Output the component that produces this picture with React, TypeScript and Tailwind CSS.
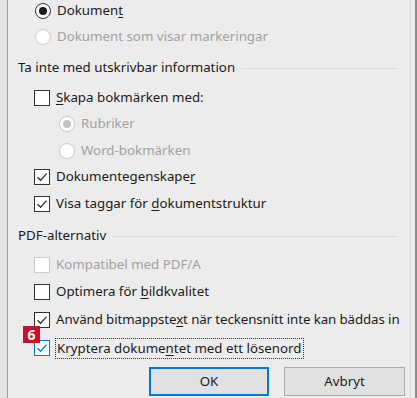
import React from 'react';

type BoxProps = { checked?: boolean; disabled?: boolean; hot?: boolean };

const CheckBox = ({ checked, disabled, hot }: BoxProps) => {
    const border = hot ? 'border-[#0078d7]' : disabled ? 'border-[#cccccc]' : 'border-[#333333]';
    const stroke = hot ? '#0078d7' : '#333333';
    return (
        <span className={`flex h-[16px] w-[16px] shrink-0 items-center justify-center border ${border} bg-white`}>
            {checked && (
                <svg width="12" height="12" viewBox="0 0 12 12" fill="none">
                    <path d="M1.5 6.2 L4.6 9.2 L10.6 2.6" stroke={stroke} strokeWidth="1.3" />
                </svg>
            )}
        </span>
    );
};

const Radio = ({ checked, disabled }: BoxProps) => (
    <span
        className={`flex h-[16px] w-[16px] shrink-0 items-center justify-center rounded-full border bg-white ${
            disabled ? 'border-[#cccccc]' : 'border-[#333333]'
        }`}
    >
        {checked && <span className={`h-[8px] w-[8px] rounded-full ${disabled ? 'bg-[#c4c4c4]' : 'bg-[#1b1b1b]'}`} />}
    </span>
);

const Row = ({ indent, mt, children }: { indent: string; mt: string; children: React.ReactNode }) => (
    <div className={`flex h-[26px] items-center gap-[6px] ${indent} ${mt}`}>{children}</div>
);

const Header = ({ text, mt }: { text: string; mt: string }) => (
    <div className={`flex h-[26px] items-center gap-[6px] pl-[10px] pr-[12px] ${mt}`}>
        <span className="text-[#1b1b1b]">{text}</span>
        <span className="h-px flex-1 bg-[#dadada]" />
    </div>
);

export default function App() {
    return (
        <div
            className="flex h-[398px] w-[417px] overflow-hidden bg-[#e4e4e4] text-[13.3px] text-[#1b1b1b]"
            style={{ fontFamily: '"Noto Sans", "Open Sans", sans-serif' }}
        >
            <div className="w-[7px] shrink-0 bg-[#e2e2e2]" />
            <div className="w-px shrink-0 bg-[#9a9a9a]" />
            <div className="relative flex flex-1 flex-col bg-[#ececec]">
                <div className="flex h-[22px] items-center gap-[6px] pl-[27px]">
                    <Radio checked />
                    <span>
                        Dokumen<span className="underline underline-offset-2">t</span>
                    </span>
                </div>
                <Row indent="pl-[27px]" mt="mt-[2px]">
                    <Radio disabled />
                    <span className="text-[#a2a2a2]">Dokument som visar markeringar</span>
                </Row>
                <Header text="Ta inte med utskrivbar information" mt="mt-[5px]" />
                <Row indent="pl-[26px]" mt="mt-[4px]">
                    <CheckBox />
                    <span>
                        <span className="underline underline-offset-2">S</span>kapa bokmärken med:
                    </span>
                </Row>
                <Row indent="pl-[51px]" mt="mt-0">
                    <Radio checked disabled />
                    <span className="text-[#a2a2a2]">Rubriker</span>
                </Row>
                <Row indent="pl-[51px]" mt="mt-[1px]">
                    <Radio disabled />
                    <span className="text-[#a2a2a2]">Word-bokmärken</span>
                </Row>
                <Row indent="pl-[26px]" mt="mt-0">
                    <CheckBox checked />
                    <span>
                        Dokumentegenskape<span className="underline underline-offset-2">r</span>
                    </span>
                </Row>
                <Row indent="pl-[26px]" mt="mt-[1px]">
                    <CheckBox checked />
                    <span>
                        Visa taggar för <span className="underline underline-offset-2">d</span>okumentstruktur
                    </span>
                </Row>
                <Header text="PDF-alternativ" mt="mt-[6px]" />
                <Row indent="pl-[26px]" mt="mt-[3px]">
                    <CheckBox disabled />
                    <span className="text-[#a2a2a2]">Kompatibel med PDF/A</span>
                </Row>
                <Row indent="pl-[26px]" mt="mt-[1px]">
                    <CheckBox />
                    <span>
                        Optimera för <span className="underline underline-offset-2">b</span>ildkvalitet
                    </span>
                </Row>
                <Row indent="pl-[26px]" mt="mt-[2px]">
                    <CheckBox checked />
                    <span className="whitespace-nowrap tracking-[-0.1px]">
                        Använd bitmappste<span className="underline underline-offset-2">x</span>t när teckensnitt inte kan bäddas in
                    </span>
                </Row>
                <div className="relative mt-[2px] flex h-[26px] items-center gap-[5px] pl-[26px]">
                    <span className="absolute left-[15px] top-[-9px] flex h-[17px] w-[17px] items-center justify-center bg-[#c8102e] text-[14px] font-bold leading-none text-white">
                        6
                    </span>
                    <CheckBox checked hot />
                    <span className="border border-dotted border-[#333333] px-[1px] leading-[19px]">
                        Kryptera dokume<span className="underline underline-offset-2">n</span>tet med ett lösenord
                    </span>
                </div>
                <div className="mt-[6px] flex gap-[15px] pl-[141px]">
                    <button className="h-[29px] w-[120px] border-2 border-[#0078d7] bg-[#e1e1e1] text-[#1b1b1b]">OK</button>
                    <button className="h-[29px] w-[121px] border border-[#adadad] bg-[#e1e1e1] text-[#1b1b1b]">Avbryt</button>
                </div>
            </div>
            <div className="w-px shrink-0 bg-[#dcdcdc]" />
            <div className="w-[4px] shrink-0 bg-[#ececec]" />
            <div className="w-[2px] shrink-0 bg-[#8a8a8a]" />
        </div>
    );
}
